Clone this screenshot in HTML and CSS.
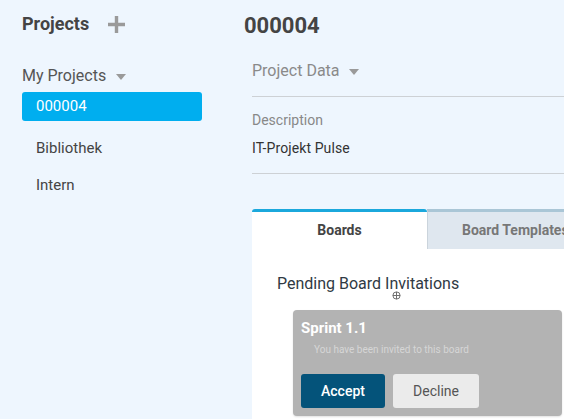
FILE: index.html
```html
<!DOCTYPE html>
<html>
<head>
<meta charset="utf-8">
<link rel="stylesheet" href="styles.css">
</head>
<body>
<div class="app">
  <aside class="sidebar">
    <div class="side-head">
      <h2 class="side-title">Projects</h2>
      <svg class="plus" width="17" height="17" viewBox="0 0 17 17"><path d="M8.5 0v17M0 8.5h17" stroke="#9a9a9a" stroke-width="3.4"/></svg>
    </div>
    <div class="group-row">
      <span class="group-label">My Projects</span>
      <span class="caret"></span>
    </div>
    <ul class="proj-list">
      <li class="proj active">000004</li>
      <li class="proj p-bib">Bibliothek</li>
      <li class="proj p-int">Intern</li>
    </ul>
  </aside>
  <main class="main">
    <h1 class="title">000004</h1>
    <div class="content">
      <div class="section-row">
        <span class="section-label">Project Data</span>
        <span class="caret"></span>
      </div>
      <div class="desc">
        <div class="desc-label">Description</div>
        <div class="desc-value">IT-Projekt Pulse</div>
      </div>
      <div class="tabs">
        <div class="tab tab-active">Boards</div>
        <div class="tab tab-inactive">Board Templates</div>
      </div>
      <div class="panel">
        <h3 class="pending">Pending Board Invitations</h3>
        <svg class="cursor" width="9" height="9" viewBox="0 0 9 9"><circle cx="4.5" cy="4.5" r="3.6" fill="none" stroke="#6f6f6f" stroke-width="1"/><path d="M4.5 0.9v7.2M0.9 4.5h7.2" stroke="#6f6f6f" stroke-width="1"/></svg>
        <div class="card">
          <div class="card-title">Sprint 1.1</div>
          <div class="card-sub">You have been invited to this board</div>
          <div class="card-actions">
            <button class="btn btn-accept">Accept</button>
            <button class="btn btn-decline">Decline</button>
          </div>
        </div>
      </div>
    </div>
  </main>
</div>
</body>
</html>
```
FILE: styles.css
```css
* { box-sizing: border-box; }
html, body { margin: 0; padding: 0; }
body {
  background: #eef6fe;
  font-family: Roboto, "Liberation Sans", sans-serif;
  color: #444;
  width: 564px;
  height: 419px;
  overflow: hidden;
}
.app {
  display: flex;
  height: 419px;
}
.sidebar {
  width: 222px;
  flex: none;
  padding: 12px 0 0 22px;
}
.side-head {
  display: flex;
  align-items: center;
  height: 24px;
}
.side-title {
  margin: 0;
  font-size: 18px;
  line-height: 24px;
  font-weight: 700;
  color: #444;
}
.plus {
  margin-left: 19px;
}
.group-row {
  display: flex;
  align-items: center;
  margin-top: 30px;
  height: 20px;
}
.group-label {
  font-size: 16px;
  line-height: 20px;
  color: #555;
}
.caret {
  width: 0;
  height: 0;
  border-left: 5.5px solid transparent;
  border-right: 5.5px solid transparent;
  border-top: 6px solid #9a9a9a;
  margin-left: 10px;
  margin-top: 2px;
}
.proj-list {
  list-style: none;
  margin: 6px 0 0;
  padding: 0;
}
.proj {
  width: 180px;
  height: 29px;
  line-height: 29px;
  padding-left: 14px;
  font-size: 15px;
  color: #444;
  border-radius: 3px;
}
.proj.active {
  background: #00aeef;
  color: #fff;
}
.p-bib { margin-top: 13px; }
.p-int { margin-top: 8px; }

.main {
  flex: 1;
  min-width: 0;
  padding: 12px 0 0 22px;
  overflow: hidden;
}
.title {
  margin: 0;
  font-size: 22px;
  line-height: 28px;
  font-weight: 700;
  color: #444;
}
.content {
  margin-left: 8px;
  position: relative;
}
.section-row {
  display: flex;
  align-items: center;
  margin-top: 20px;
  padding-bottom: 14px;
  border-bottom: 1px solid #cdd1d5;
  height: 37px;
}
.section-label {
  font-size: 16px;
  line-height: 22px;
  color: #8a8a8a;
}
.section-row .caret { margin-left: 9px; }
.desc {
  padding-bottom: 16px;
  border-bottom: 1px solid #cdd1d5;
}
.desc-label {
  margin-top: 14px;
  font-size: 14px;
  line-height: 18px;
  color: #888;
}
.desc-value {
  margin-top: 10px;
  font-size: 14px;
  line-height: 18px;
  letter-spacing: 0.1px;
  color: #333;
}
.tabs {
  display: flex;
  margin-top: 35px;
  height: 40px;
}
.tab {
  width: 175px;
  flex: none;
  height: 40px;
  border-top: 3px solid;
  font-size: 14px;
  font-weight: 700;
  line-height: 37px;
  text-align: center;
}
.tab-active {
  background: #fff;
  border-top-color: #1ba8dc;
  color: #444;
  border-radius: 3px 3px 0 0;
}
.tab-inactive {
  background: #dfe7ef;
  border-top-color: #aac6d6;
  border-left: 1px solid #cbd4dc;
  color: #777;
  text-align: left;
  padding-left: 34px;
  white-space: nowrap;
}
.panel {
  background: #fff;
  padding: 25px 0 20px 25px;
  position: relative;
  height: 200px;
}
.pending {
  margin: 0;
  font-size: 16px;
  line-height: 20px;
  font-weight: 400;
  color: #2f3a44;
}
.cursor {
  position: absolute;
  left: 140px;
  top: 42px;
}
.card {
  margin: 16px 0 0 16px;
  width: 269px;
  background: #b3b3b3;
  border-radius: 4px;
  padding: 8px;
  box-shadow: 0 1px 2px rgba(0,0,0,0.12);
}
.card-title {
  font-size: 15px;
  line-height: 20px;
  font-weight: 700;
  color: #fff;
}
.card-sub {
  margin-top: 6px;
  padding-left: 13px;
  font-size: 10px;
  line-height: 12px;
  color: #d6d6d6;
}
.card-actions {
  display: flex;
  gap: 8px;
  margin-top: 18px;
}
.btn {
  height: 34px;
  border: none;
  border-radius: 3px;
  font-family: Roboto, "Liberation Sans", sans-serif;
  font-size: 14px;
  padding: 0;
}
.btn-accept {
  width: 84px;
  background: #04537a;
  color: #fff;
  font-weight: 500;
}
.btn-decline {
  width: 86px;
  background: #ebebeb;
  color: #555;
}
```
